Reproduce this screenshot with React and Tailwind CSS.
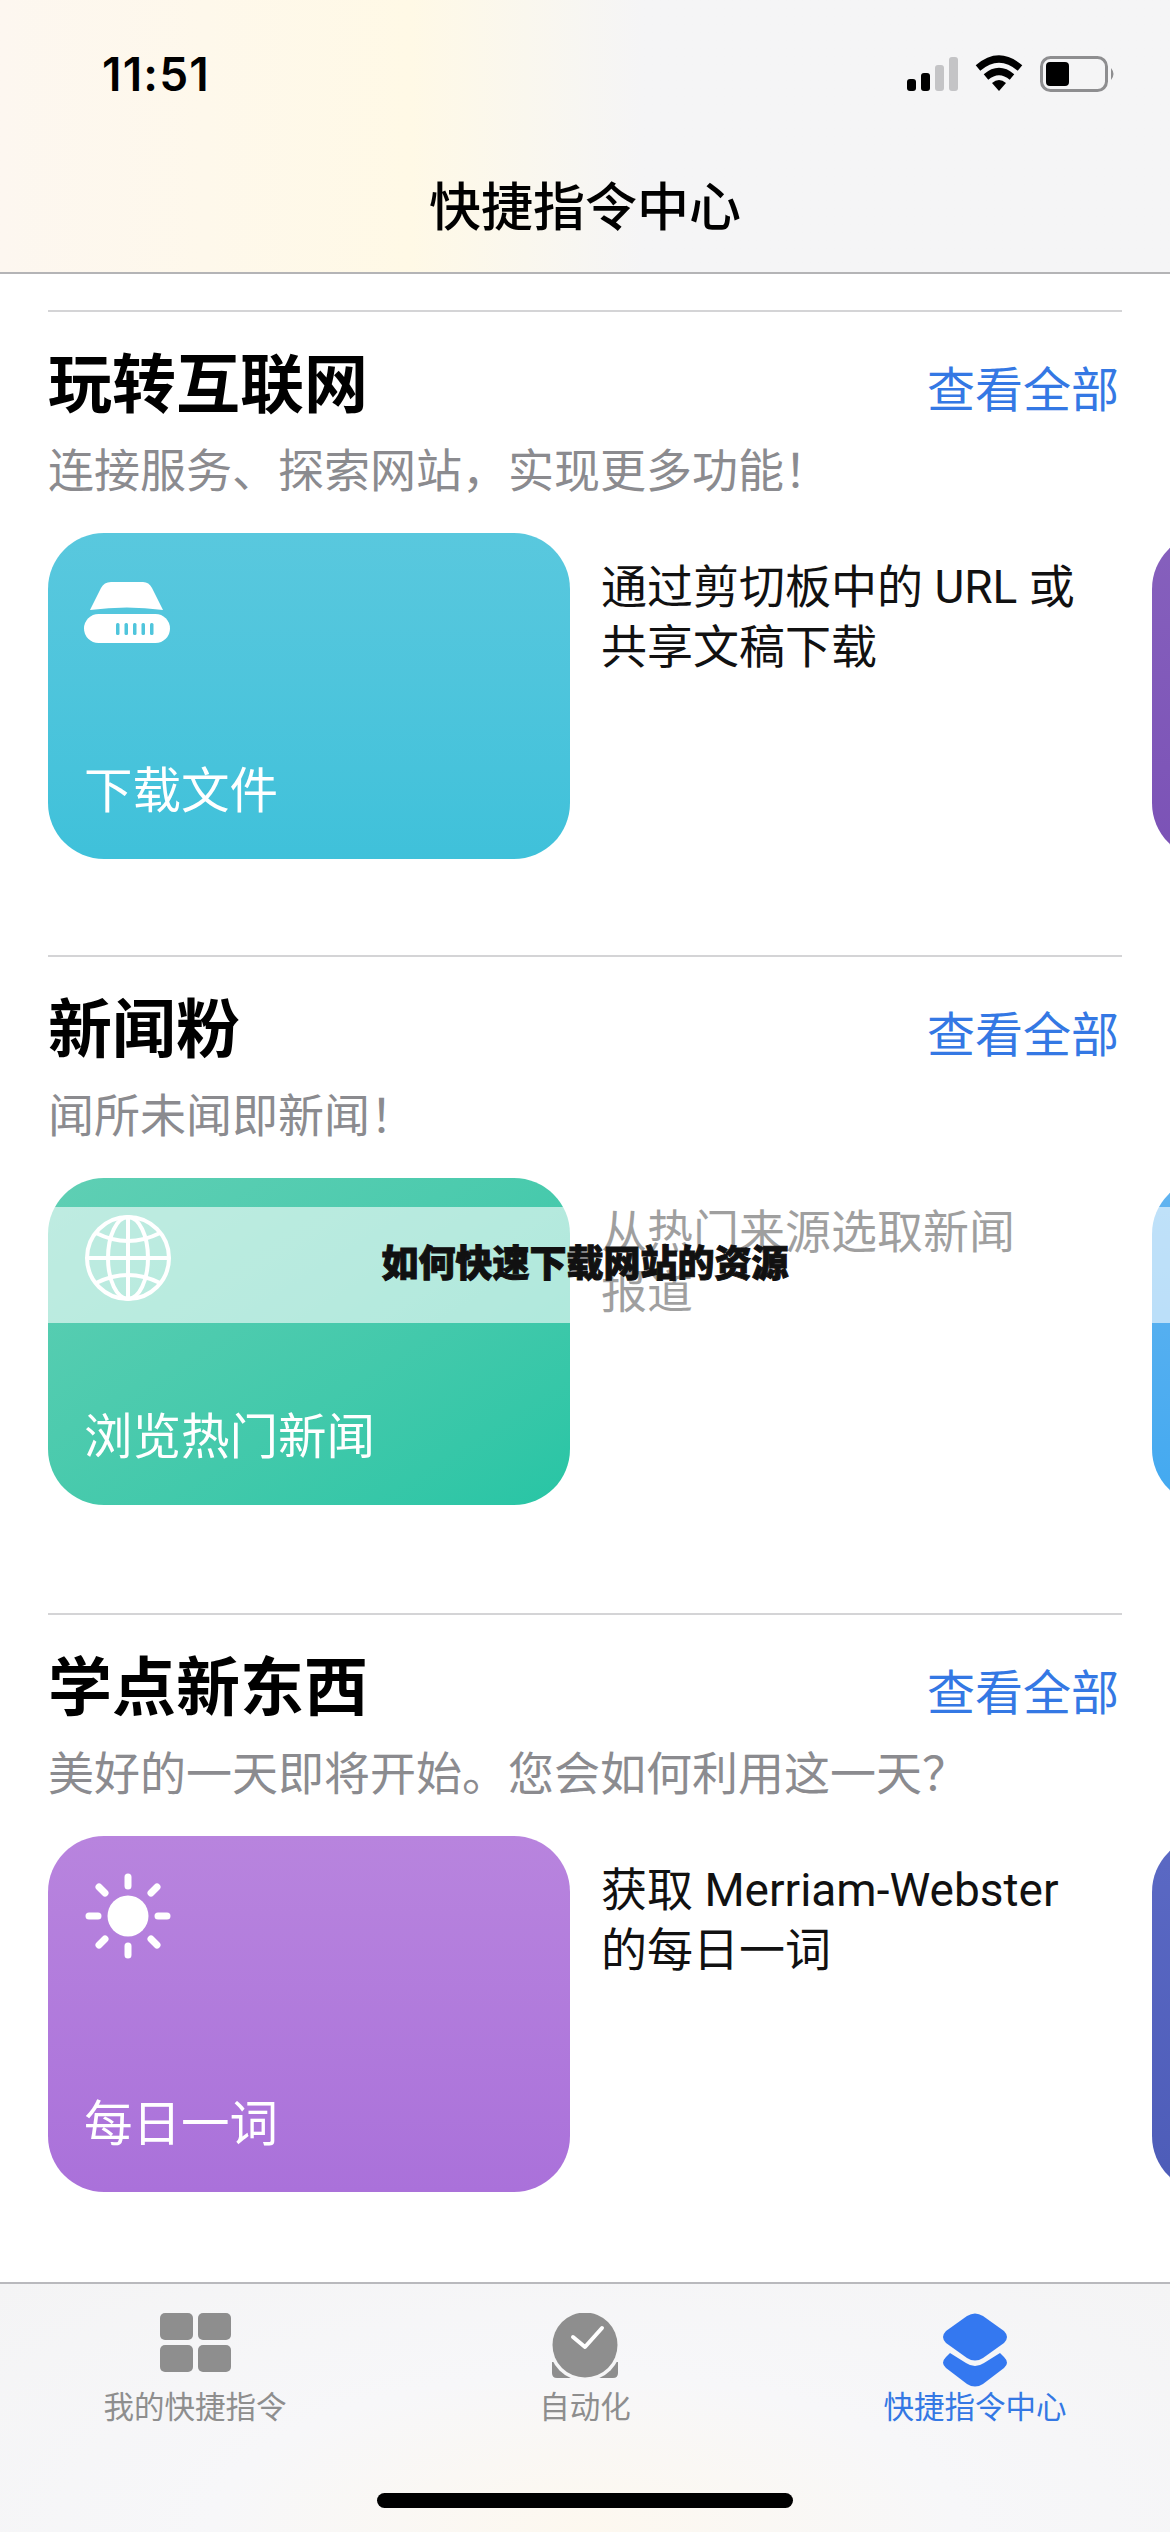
import React from "react";

const cjk = "font-['Inter','Noto_Sans_CJK_SC',sans-serif]";

const DriveIcon = () => (
  <svg width="86" height="62" viewBox="0 0 86 62">
    <path d="M6 28 L17 6 Q20 0 27 0 L59 0 Q65 0 68 6 L79 28 Q43 23 6 28 Z" fill="#fff" />
    <rect x="0" y="32" width="86" height="29" rx="14.5" fill="#fff" />
    <rect x="32" y="41" width="3.500" height="12" rx="1.5" fill="#4fc5dc" />
    <rect x="40.500" y="41" width="3.500" height="12" rx="1.5" fill="#4fc5dc" />
    <rect x="49" y="41" width="3.500" height="12" rx="1.5" fill="#4fc5dc" />
    <rect x="57.500" y="41" width="3.500" height="12" rx="1.5" fill="#4fc5dc" />
    <rect x="66" y="41" width="3.500" height="12" rx="1.5" fill="#4fc5dc" />
  </svg>
);

const GlobeIcon = () => (
  <svg width="88" height="88" viewBox="0 0 88 88" fill="none" stroke="#fff" strokeWidth="4">
    <circle cx="44" cy="44" r="41" />
    <ellipse cx="44" cy="44" rx="20" ry="41" />
    <path d="M44 3 V85 M3 44 H85" />
    <path d="M12 19 Q44 35 76 19 M12 69 Q44 53 76 69" />
  </svg>
);

const SunIcon = () => (
  <svg width="88" height="88" viewBox="0 0 88 88" stroke="#fff" strokeWidth="7" strokeLinecap="round">
    <circle cx="44" cy="44" r="20.500" fill="#fff" stroke="none" />
    <path d="M44 5 V14 M44 74 V83 M5 44 H14 M74 44 H83 M15 15 L21 21 M67 67 L73 73 M15 73 L21 67 M67 21 L73 15" />
  </svg>
);

const sections = [
  {
    title: "玩转互联网",
    sub: "连接服务、探索网站，实现更多功能！",
    card: "下载文件",
    desc: ["通过剪切板中的 URL 或", "共享文稿下载"],
    icon: <DriveIcon />,
    wrap: "h-[645px]",
    cardBox: "h-[326px] bg-gradient-to-b from-[#59c8de] to-[#3fc1da]",
    next: "h-[326px] bg-gradient-to-b from-[#8660bd] to-[#7b52b6]",
    iconBox: "pt-[49px]",
  },
  {
    title: "新闻粉",
    sub: "闻所未闻即新闻！",
    card: "浏览热门新闻",
    desc: ["从热门来源选取新闻", "报道"],
    icon: <GlobeIcon />,
    wrap: "h-[658px]",
    cardBox: "h-[327px] bg-gradient-to-br from-[#5fcfb4] to-[#27c5a5]",
    next: "h-[327px] bg-gradient-to-b from-[#62b4f0] to-[#42a9f0]",
    iconBox: "pt-[36px]",
  },
  {
    title: "学点新东西",
    sub: "美好的一天即将开始。您会如何利用这一天？",
    card: "每日一词",
    desc: ["获取 Merriam-Webster", "的每日一词"],
    icon: <SunIcon />,
    wrap: "h-[659px]",
    cardBox: "h-[356px] bg-gradient-to-b from-[#b884de] to-[#aa71da]",
    next: "h-[356px] bg-gradient-to-b from-[#5b69c4] to-[#4d5cb8]",
    iconBox: "pt-[36px]",
  },
];

const Section = ({ s }) => (
  <section className={`${s.wrap} relative shrink-0 overflow-hidden`}>
    <div className="mx-12 h-0.5 bg-[#d4d4d6]" />
    <div className="mx-12 mt-8 flex h-20 items-center justify-between">
      <h2 className="text-[64px] leading-20 font-bold text-black">{s.title}</h2>
      <span className="pt-3 pr-[3px] text-[48px] leading-20 text-[#3478e4]">查看全部</span>
    </div>
    <p className="mx-12 mt-4 h-[60px] text-[46px] leading-[60px] text-[#8b8b8f]">{s.sub}</p>
    <div className="mt-[33px] ml-12 flex">
      <div className={`${s.cardBox} flex w-[522px] shrink-0 flex-col justify-between rounded-[56px] pl-9`}>
        <div className={s.iconBox}>{s.icon}</div>
        <div className="pb-[38px] text-[48.5px] leading-[60px] text-white">{s.card}</div>
      </div>
      <div className="mt-[24px] ml-[31px] w-[551px] shrink-0 font-['Roboto','Noto_Sans_CJK_SC',sans-serif] text-[46px] leading-[60px] text-[#111]">
        {s.desc.map((line) => (
          <p key={line}>{line}</p>
        ))}
      </div>
      <div className={`${s.next} w-[522px] shrink-0 rounded-[56px]`} />
    </div>
  </section>
);

const StatusBar = () => (
  <div className="flex h-[178px] items-start justify-between pt-[49px] pr-[55px] pl-[102px]">
    <span className="font-['Inter',sans-serif] text-[46px] leading-[50px] font-semibold tracking-[1.2px] text-black">11:51</span>
    <svg className="mt-[6px]" width="208" height="38" viewBox="0 0 208 38">
      <rect x="0" y="24" width="9" height="12" rx="3" fill="#000" />
      <rect x="14" y="18" width="9" height="18" rx="3" fill="#000" />
      <rect x="28" y="10" width="9" height="26" rx="3" fill="#c4c4c6" />
      <rect x="42" y="2" width="9" height="34" rx="3" fill="#c4c4c6" />
      <path d="M71 13 Q92 -5 113 13" fill="none" stroke="#000" strokeWidth="7" />
      <path d="M79 22 Q92 11 105 22" fill="none" stroke="#000" strokeWidth="7" />
      <path d="M85 28 Q92 22 99 28 L92 36 Z" fill="#000" />
      <rect x="134.500" y="2.500" width="65" height="33" rx="9" fill="none" stroke="#8e8e90" strokeWidth="3" />
      <rect x="139" y="7" width="23" height="24" rx="4" fill="#000" />
      <path d="M204 13 Q209 19 204 25 Z" fill="#8e8e90" />
    </svg>
  </div>
);

const TabGrid = () => (
  <svg width="71" height="60" viewBox="0 0 71 60" fill="#8e8e8e">
    <rect x="0" y="0" width="33" height="27" rx="5" />
    <rect x="38" y="0" width="33" height="27" rx="5" />
    <rect x="0" y="32" width="33" height="27" rx="5" />
    <rect x="38" y="32" width="33" height="27" rx="5" />
  </svg>
);

const TabAuto = () => (
  <svg width="66" height="66" viewBox="0 0 66 66">
    <path d="M0 49 H66 V60 Q66 65 61 65 H5 Q0 65 0 60 Z" fill="#8e8e8e" />
    <circle cx="33" cy="32" r="36" fill="#f6f6f7" />
    <circle cx="33" cy="32" r="32.500" fill="#8e8e8e" />
    <path d="M21 24 L33 34 L50 15" fill="none" stroke="#fff" strokeWidth="4" strokeLinecap="round" strokeLinejoin="round" />
  </svg>
);

const TabGallery = () => (
  <svg width="66" height="74" viewBox="0 0 66 74" fill="#3478f0">
    <path d="M25 3 Q33 -2 41 3 L62 18 Q68 24 62 30 L41 45 Q33 50 25 45 L4 30 Q-2 24 4 18 Z" />
    <path d="M8 40 L24 50 Q33 56 42 50 L58 40 L62 44 Q68 50 62 55 L41 71 Q33 76 25 71 L4 55 Q-2 50 4 44 Z" />
  </svg>
);

const tabs = [
  { label: "我的快捷指令", color: "text-[#8e8e8e]", icon: <TabGrid /> },
  { label: "自动化", color: "text-[#8e8e8e]", icon: <TabAuto /> },
  { label: "快捷指令中心", color: "text-[#3478e4]", icon: <TabGallery /> },
];

const App = () => (
  <div className={`${cjk} relative flex h-[2532px] w-[1170px] flex-col overflow-hidden bg-white`}>
    <header className="h-[274px] shrink-0 border-b-2 border-[#b4b4b6] bg-gradient-to-r from-[#fdf7f0] via-[#fff9e6] via-35% to-[#f5f5f6] to-55%">
      <StatusBar />
      <h1 className="text-center text-[52px] leading-[60px] font-medium text-black">快捷指令中心</h1>
    </header>

    <main className="flex-1 overflow-hidden pt-[36px]">
      {sections.map((s) => (
        <Section key={s.title} s={s} />
      ))}
    </main>

    <footer className="relative h-[250px] shrink-0 border-t-2 border-[#b9b9bd] bg-[radial-gradient(ellipse_at_50%_100%,#fdf8ef_0%,#f7f7f9_45%,#f4f4f5_100%)]">
      <div className="grid grid-cols-3 pt-[26px]">
        {tabs.map((t) => (
          <div key={t.label} className="flex flex-col items-center">
            <div className="flex h-[74px] items-start pt-[3px]">{t.icon}</div>
            <span className={`mt-[3px] text-[30.5px] leading-10 ${t.color}`}>{t.label}</span>
          </div>
        ))}
      </div>
      <div className="absolute bottom-[24px] left-[377px] h-[15px] w-[416px] rounded-full bg-black" />
    </footer>

    {/* watermark band over the page */}
    <div className="absolute top-[1207px] left-0 h-[116px] w-full bg-white/60" />
    <div className="absolute top-[1240px] left-0 w-full text-center text-[37px] leading-[48px] font-black text-[#111] [-webkit-text-stroke:1px_#111]">
      如何快速下载网站的资源
    </div>
  </div>
);

export default App;
